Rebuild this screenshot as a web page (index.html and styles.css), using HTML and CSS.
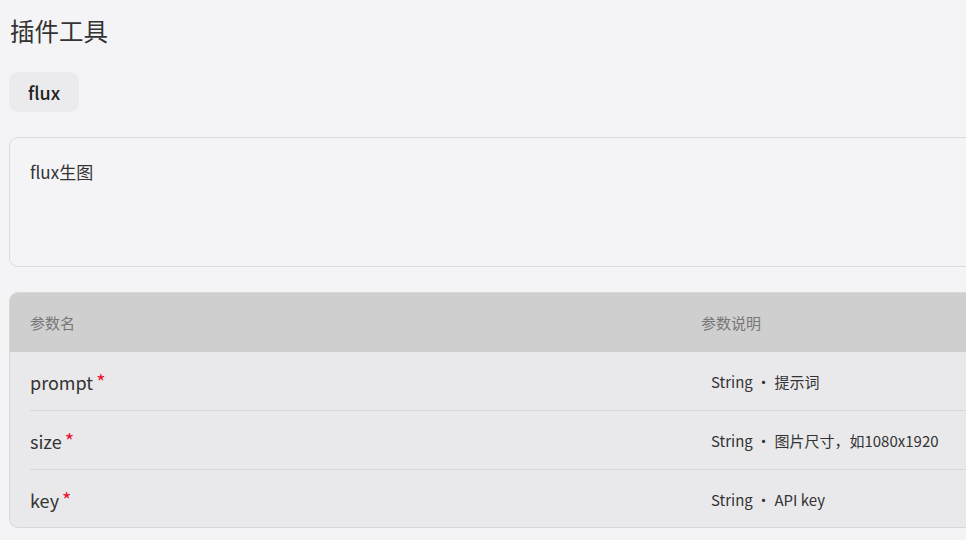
FILE: index.html
```html
<!DOCTYPE html>
<html lang="zh">
<head>
<meta charset="utf-8">
<title>插件工具</title>
<link rel="stylesheet" href="styles.css">
</head>
<body>
<div class="page">
  <h1 class="title">插件工具</h1>
  <div class="tags"><span class="tag">flux</span></div>
  <div class="desc-card">flux生图</div>
  <div class="table">
    <div class="row head">
      <div class="cell name">参数名</div>
      <div class="cell info">参数说明</div>
    </div>
    <div class="row">
      <div class="cell name">prompt<span class="req">*</span></div>
      <div class="cell info">String ・ 提示词</div>
    </div>
    <div class="row">
      <div class="cell name">size<span class="req">*</span></div>
      <div class="cell info">String ・ 图片尺寸，如1080x1920</div>
    </div>
    <div class="row last">
      <div class="cell name">key<span class="req">*</span></div>
      <div class="cell info">String ・ API key</div>
    </div>
  </div>
</div>
</body>
</html>
```
FILE: styles.css
```css
html, body {
  margin: 0;
  padding: 0;
  background: #f4f4f6;
  overflow: hidden;
}
body {
  font-family: "Noto Sans CJK SC", "Noto Sans", sans-serif;
  color: #333;
}
.page {
  padding: 0 0 0 9px;
  width: 1300px;
}
.title {
  margin: 0;
  padding-top: 14px;
  padding-left: 1px;
  font-size: 24.5px;
  font-weight: 400;
  line-height: 34px;
  color: #333;
}
.tags {
  margin-top: 24px;
  display: flex;
}
.tag {
  display: flex;
  align-items: center;
  height: 40px;
  padding: 0 19px;
  box-sizing: border-box;
  background: #ebebed;
  border-radius: 9px;
  font-size: 18px;
  font-weight: 500;
  color: #222;
}
.desc-card {
  margin-top: 25px;
  height: 130px;
  box-sizing: border-box;
  border: 1px solid #dcdcdf;
  border-radius: 9px;
  padding: 22px 20px;
  font-size: 17px;
  line-height: 24px;
  color: #333;
}
.table {
  margin-top: 25px;
  border: 1px solid #d7d7da;
  border-radius: 9px;
  overflow: hidden;
  background: #e9e9eb;
}
.row {
  display: flex;
  height: 59px;
  align-items: center;
  margin-left: 20px;
  border-bottom: 1px solid #d8d8db;
  box-sizing: border-box;
  padding-top: 1px;
}
.row.last { border-bottom: none; height: 57px; }
.row.head {
  margin-left: 0;
  padding-left: 20px;
  padding-top: 0;
  height: 59px;
  background: #cfcfcf;
  border-bottom: none;
}
.cell.name {
  width: 671px;
  font-size: 18px;
  color: #333;
}
.cell.info {
  font-size: 15px;
  padding-left: 10px;
  color: #333;
}
.head .cell.name, .head .cell.info {
  font-size: 15px;
  color: #777;
}
.head .cell.info { padding-left: 0; }
.req {
  color: #e8112d;
  font-size: 20px;
  margin-left: 3px;
}
```
